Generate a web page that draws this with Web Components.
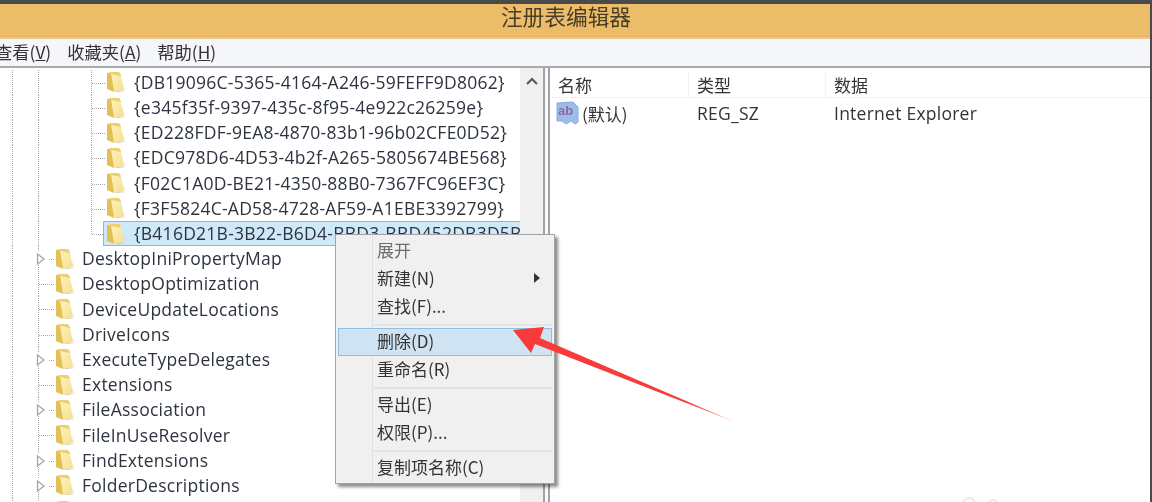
<!DOCTYPE html>
<html lang="zh">
<head>
<meta charset="utf-8">
<title>注册表编辑器</title>
<style>
  html, body { margin: 0; height: 100%; background: #fff; overflow: hidden; }
  body { font-family: "Open Sans", "Noto Sans CJK SC", sans-serif; color: #2b2b2b; }
</style>
</head>
<body>
<reg-window title-text="注册表编辑器">
  <reg-menubar slot="menubar">
    <span style="margin-left:-5px">查看(<u>V</u>)</span>
    <span>收藏夹(<u>A</u>)</span>
    <span>帮助(<u>H</u>)</span>
  </reg-menubar>

  <reg-tree slot="tree">
    <reg-node depth="2" line>{DB19096C-5365-4164-A246-59FEFF9D8062}</reg-node>
    <reg-node depth="2" line>{e345f35f-9397-435c-8f95-4e922c26259e}</reg-node>
    <reg-node depth="2" line>{ED228FDF-9EA8-4870-83b1-96b02CFE0D52}</reg-node>
    <reg-node depth="2" line>{EDC978D6-4D53-4b2f-A265-5805674BE568}</reg-node>
    <reg-node depth="2" line>{F02C1A0D-BE21-4350-88B0-7367FC96EF3C}</reg-node>
    <reg-node depth="2" line>{F3F5824C-AD58-4728-AF59-A1EBE3392799}</reg-node>
    <reg-node depth="2" line last selected>{B416D21B-3B22-B6D4-BBD3-BBD452DB3D5B}</reg-node>
    <reg-node depth="1" expander>DesktopIniPropertyMap</reg-node>
    <reg-node depth="1">DesktopOptimization</reg-node>
    <reg-node depth="1">DeviceUpdateLocations</reg-node>
    <reg-node depth="1">DriveIcons</reg-node>
    <reg-node depth="1" expander>ExecuteTypeDelegates</reg-node>
    <reg-node depth="1">Extensions</reg-node>
    <reg-node depth="1" expander>FileAssociation</reg-node>
    <reg-node depth="1">FileInUseResolver</reg-node>
    <reg-node depth="1" expander>FindExtensions</reg-node>
    <reg-node depth="1" expander>FolderDescriptions</reg-node>
    <reg-node depth="1"></reg-node>
  </reg-tree>

  <reg-values slot="values">
    <reg-value name="(默认)" type="REG_SZ" data="Internet Explorer"></reg-value>
  </reg-values>

  <reg-menu slot="overlay">
    <reg-menu-item disabled>展开</reg-menu-item>
    <reg-menu-item submenu>新建(N)</reg-menu-item>
    <reg-menu-item>查找(F)...</reg-menu-item>
    <reg-menu-sep></reg-menu-sep>
    <reg-menu-item active>删除(D)</reg-menu-item>
    <reg-menu-item>重命名(R)</reg-menu-item>
    <reg-menu-sep></reg-menu-sep>
    <reg-menu-item>导出(E)</reg-menu-item>
    <reg-menu-item>权限(P)...</reg-menu-item>
    <reg-menu-sep></reg-menu-sep>
    <reg-menu-item>复制项名称(C)</reg-menu-item>
  </reg-menu>
</reg-window>

<script>
// Dotted tree guides are plain 1px repeating gradients, placed per row
const dotsV = 'repeating-linear-gradient(to bottom,#a9a9a9 0 1px,transparent 1px 2px)';
const dotsH = 'repeating-linear-gradient(to right,#a9a9a9 0 1px,transparent 1px 2px)';

const folderSvg = `
<svg class="folder" width="22" height="24" viewBox="0 0 22 24" aria-hidden="true">
  <defs>
    <linearGradient id="f" x1="0" x2="1" y1="0" y2="1">
      <stop offset="0" stop-color="#fdf3bd"/><stop offset="1" stop-color="#f6dd8c"/>
    </linearGradient>
    <linearGradient id="s" x1="0" x2="1" y1="0" y2="0">
      <stop offset="0" stop-color="#8f8f8f" stop-opacity=".6"/><stop offset="1" stop-color="#c4c4c4" stop-opacity="0"/>
    </linearGradient>
  </defs>
  <path d="M14 9 L22 20 L20 22 L11 22 Z" fill="url(#s)"/>
  <path d="M2 3 L6 2 L14 2 L16 5 L16 18 L9 20 L2 19 Z" fill="#eccf70"/>
  <path d="M6 4 L16 6 L19 20 L9 22 Z" fill="url(#f)"/>
  <path d="M2 3 L6 4 L9 22 L2 19 Z" fill="#e2c056"/>
</svg>`;

class RegWindow extends HTMLElement {
  constructor() {
    super();
    this.attachShadow({ mode: 'open' });
  }
  connectedCallback() {
    this.shadowRoot.innerHTML = `
      <style>
        :host {
          display: flex; flex-direction: column; box-sizing: border-box;
          position: relative; width: 1152px; height: 502px; overflow: hidden;
          background: #fff; border-top: 4px solid #4a4a4a; border-right: 2px solid #4a4a4a;
          filter: blur(.4px);
        }
        .title {
          flex: none; height: 33px; background: #ecbd69; color: #4a3d27;
          border-bottom: 2px solid #e9c793; box-shadow: inset 0 -1px #e2b260;
          text-align: center; font: 21.700px/23px "Noto Sans CJK SC", sans-serif;
        }
        .title span { position: relative; left: -9px; }
        .panes { flex: 1; display: flex; min-height: 0; }
        .left { flex: none; width: 545px; display: flex; border-right: 2px solid #a0a3a8; box-sizing: border-box; height: 100%; }
        .gap { flex: none; width: 3px; background: #fafafa; border-right: 2px solid #a0a3a8; }
        .right { flex: 1; min-width: 0; }
        .scroll { flex: none; width: 23px; background: #f0f0f0; display: flex; justify-content: center; padding-top: 9px; box-sizing: border-box; }
        .tree { flex: 1; min-width: 0; overflow: hidden; }
      </style>
      <div class="title"><span>${this.getAttribute('title-text')}</span></div>
      <slot name="menubar"></slot>
      <div class="panes">
        <div class="left">
          <div class="tree"><slot name="tree"></slot></div>
          <div class="scroll">
            <svg width="12" height="8" viewBox="0 0 12 8"><path d="M1 7 L6 2 L11 7" fill="none" stroke="#555" stroke-width="2"/></svg>
          </div>
        </div>
        <div class="gap"></div>
        <div class="right"><slot name="values"></slot></div>
      </div>
      <slot name="overlay"></slot>
      <svg style="position:absolute;left:500px;top:316px" width="250" height="120" viewBox="500 320 250 120" aria-hidden="true">
        <defs>
          <linearGradient id="arrow" gradientUnits="userSpaceOnUse" x1="540" y1="340" x2="735" y2="422">
            <stop offset="0" stop-color="#f83a3a"/><stop offset=".75" stop-color="#f63c3c"/><stop offset="1" stop-color="#fbb0b0"/>
          </linearGradient>
        </defs>
        <path d="M513 330 L544 327 L540 338 L735 422 L535 344 L531 353 Z" fill="url(#arrow)"/>
      </svg>
      <svg style="position:absolute;left:960px;top:490px" width="50" height="12" viewBox="0 0 50 12" aria-hidden="true">
        <circle cx="9" cy="10" r="6" fill="none" stroke="#e8e8e8" stroke-width="2"/>
        <circle cx="33" cy="11" r="5" fill="none" stroke="#e8e8e8" stroke-width="2"/>
      </svg>`;
  }
}

class RegMenubar extends HTMLElement {
  constructor() {
    super();
    this.attachShadow({ mode: 'open' });
  }
  connectedCallback() {
    this.shadowRoot.innerHTML = `
      <style>
        :host {
          display: flex; flex: none; gap: 16px; align-items: center; box-sizing: border-box;
          height: 29px; padding-bottom: 2px; background: #f5f6f9; border-bottom: 2px solid #a7abb0;
          font: 17.300px "Noto Sans CJK SC", sans-serif; color: #333; white-space: nowrap;
        }
      </style>
      <slot></slot>`;
  }
}

class RegTree extends HTMLElement {
  constructor() {
    super();
    this.attachShadow({ mode: 'open' });
  }
  connectedCallback() {
    this.shadowRoot.innerHTML = `
      <style>:host { display: block; padding-top: 1.800px; }</style>
      <slot></slot>`;
  }
}

class RegNode extends HTMLElement {
  constructor() {
    super();
    this.attachShadow({ mode: 'open' });
  }
  connectedCallback() {
    const depth = this.getAttribute('depth');
    const deep = depth === '2';
    const selected = this.hasAttribute('selected');
    const expander = this.hasAttribute('expander');
    // guides: x=12 always, x=38 for the level-1 column, x=91 for the open branch
    const layers = [`${dotsV} 12px 0/1px 100% no-repeat`];
    layers.push(`${dotsV} 38px 0/1px ${expander ? '6px' : '100%'} no-repeat`);
    if (expander) layers.push(`${dotsV} 38px 19px/1px 6px no-repeat`);
    if (deep) layers.push(`${dotsV} 91px 0/1px ${this.hasAttribute('last') ? '13px' : '100%'} no-repeat`);
    if (deep) layers.push(`${dotsH} 92px 13px/14px 1px no-repeat`);
    else layers.push(`${dotsH} ${expander ? '49px' : '39px'} 13px/${expander ? '5px' : '15px'} 1px no-repeat`);

    this.shadowRoot.innerHTML = `
      <style>
        :host {
          display: block; height: 25.200px; white-space: nowrap;
          background: ${layers.join(',')};
          font: 17.500px/25px "Open Sans", "Noto Sans CJK SC", sans-serif; letter-spacing: .25px; color: #2d3440;
        }
        .row { display: flex; align-items: center; height: 100%; box-sizing: border-box; padding-left: ${deep ? 105 : 54}px; position: relative; }
        .cell { display: flex; align-items: center; gap: ${deep ? 7 : 6}px; height: 25px; box-sizing: border-box; }
        .selected { flex: 1; margin-left: -2px; padding-left: 1px; background: #cfe9f8; border: 1px solid #6fc2f0; }
        svg.folder { display: block; flex: none; }
        .exp { position: absolute; left: 36px; top: 7px; }
      </style>
      <div class="row">
        ${expander ? `<svg class="exp" width="10" height="12" viewBox="0 0 10 12"><path d="M1.500 1 L8 6 L1.500 11 Z" fill="#fff" stroke="#a6a6a6" stroke-width="1.300"/></svg>` : ''}
        <div class="cell ${selected ? 'selected' : ''}">
          ${folderSvg}
          <span><slot></slot></span>
        </div>
      </div>`;
  }
}

class RegValues extends HTMLElement {
  constructor() {
    super();
    this.attachShadow({ mode: 'open' });
  }
  connectedCallback() {
    this.shadowRoot.innerHTML = `
      <style>
        :host { display: block; padding-top: 3px; font: 17.500px "Open Sans", "Noto Sans CJK SC", sans-serif; color: #333; letter-spacing: .25px; }
        .head { display: grid; grid-template-columns: 139px 137px 1fr; height: 26px; align-items: center; border-bottom: 1px solid #eef3f8; }
        .head span { padding-left: 8px; height: 100%; display: flex; align-items: center; border-right: 1px solid #eef3f8; font: 17px "Noto Sans CJK SC", sans-serif; letter-spacing: 0; }
        .head span:last-child { border-right: 0; }
      </style>
      <div class="head"><span>名称</span><span>类型</span><span>数据</span></div>
      <slot></slot>`;
  }
}

class RegValue extends HTMLElement {
  constructor() {
    super();
    this.attachShadow({ mode: 'open' });
  }
  connectedCallback() {
    this.shadowRoot.innerHTML = `
      <style>
        :host { display: grid; grid-template-columns: 139px 137px 1fr; height: 30px; align-items: center; }
        span { padding-left: 8px; }
        .name { display: flex; align-items: center; gap: 2px; padding-left: 6px; font: 17px "Noto Sans CJK SC", sans-serif; letter-spacing: 0; }
        .ab { position: relative; flex: none; width: 24px; height: 24px; }
        .ab b { position: absolute; left: 2px; top: 0; font: bold 13px/19px "Liberation Sans", sans-serif; color: #8f6a9f; }
      </style>
      <div class="name">
        <div class="ab">
          <svg width="24" height="24" viewBox="0 0 24 24" aria-hidden="true">
            <path d="M1 2 L17 1 L22 6 L22 21 L19 23 L15 20 L10 23 L6 20 L1 20 Z" fill="#9bbdea" stroke="#86ace0" stroke-width="1"/>
          </svg>
          <b>ab</b>
        </div>
        <span style="padding:0">${this.getAttribute('name')}</span>
      </div>
      <span>${this.getAttribute('type')}</span>
      <span>${this.getAttribute('data')}</span>`;
  }
}

class RegMenu extends HTMLElement {
  constructor() {
    super();
    this.attachShadow({ mode: 'open' });
  }
  connectedCallback() {
    this.shadowRoot.innerHTML = `
      <style>
        :host {
          position: absolute; left: 335px; top: 230px; width: 220px; box-sizing: border-box;
          padding: 2px 2px 1px; background: #f0f0f0; border: 1px solid #a3a3a3;
          box-shadow: 3px 3px 3px rgba(0,0,0,.45);
          font: 17px "Noto Sans CJK SC", sans-serif; color: #333;
        }
        .col { position: absolute; left: 36px; top: 1px; bottom: 1px; width: 1px; background: #e0e0e0; }
      </style>
      <div class="col"></div>
      <slot></slot>`;
  }
}

class RegMenuItem extends HTMLElement {
  constructor() {
    super();
    this.attachShadow({ mode: 'open' });
  }
  connectedCallback() {
    const active = this.hasAttribute('active');
    this.shadowRoot.innerHTML = `
      <style>
        :host {
          display: flex; align-items: center; justify-content: space-between; position: relative;
          height: 28px; box-sizing: border-box; padding: 0 12px 3px 39px;
          color: ${this.hasAttribute('disabled') ? '#6d6d6d' : 'inherit'};
          ${active ? 'background:#d0e3f3;border:1px solid #8fbde6;padding-left:38px;padding-right:11px;' : ''}
        }
        i { width: 0; height: 0; border-left: 6px solid #333; border-top: 5px solid transparent; border-bottom: 5px solid transparent; }
      </style>
      <span><slot></slot></span>
      ${this.hasAttribute('submenu') ? '<i></i>' : ''}`;
  }
}

class RegMenuSep extends HTMLElement {
  constructor() {
    super();
    this.attachShadow({ mode: 'open' });
  }
  connectedCallback() {
    this.shadowRoot.innerHTML = `
      <style>
        :host { display: flex; align-items: center; height: 7px; padding-left: 36px; }
        div { flex: 1; height: 2px; background: #e3e3e3; }
      </style>
      <div></div>`;
  }
}

customElements.define('reg-window', RegWindow);
customElements.define('reg-menubar', RegMenubar);
customElements.define('reg-tree', RegTree);
customElements.define('reg-node', RegNode);
customElements.define('reg-values', RegValues);
customElements.define('reg-value', RegValue);
customElements.define('reg-menu', RegMenu);
customElements.define('reg-menu-item', RegMenuItem);
customElements.define('reg-menu-sep', RegMenuSep);
</script>
</body>
</html>
